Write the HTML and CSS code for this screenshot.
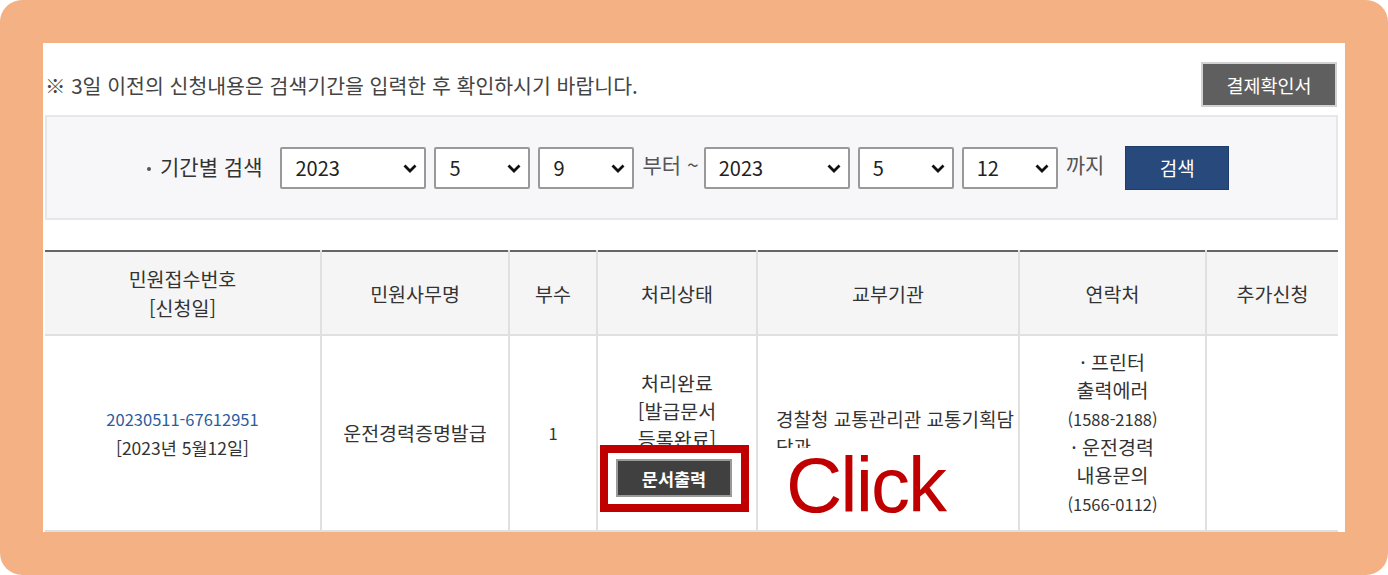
FILE: index.html
```html
<!DOCTYPE html>
<html lang="ko">
  <head>
    <meta charset="UTF-8" />
    <meta name="viewport" content="width=device-width, initial-scale=1.0" />
    <title>민원신청내역</title>
    <link rel="stylesheet" href="styles.css">
  </head>
  <body>
    <div class="frame">
      <div class="panel">
        <!-- notice + receipt button -->
        <div class="top-row">
          <p class="notice">※ 3일 이전의 신청내용은 검색기간을 입력한 후 확인하시기 바랍니다.</p>
          <button class="btn-receipt" type="button">결제확인서</button>
        </div>

        <!-- period search -->
        <form class="search-box">
          <span class="search-label">기간별 검색</span>
          <div class="sel sel-year">
            <select><option>2023</option></select>
            <svg width="14" height="9" viewBox="0 0 14 9"><path d="M1.5 1.5 L7 7 L12.5 1.5" fill="none" stroke="#111" stroke-width="2.8"/></svg>
          </div>
          <div class="sel">
            <select><option>5</option></select>
            <svg width="14" height="9" viewBox="0 0 14 9"><path d="M1.5 1.5 L7 7 L12.5 1.5" fill="none" stroke="#111" stroke-width="2.8"/></svg>
          </div>
          <div class="sel">
            <select><option>9</option></select>
            <svg width="14" height="9" viewBox="0 0 14 9"><path d="M1.5 1.5 L7 7 L12.5 1.5" fill="none" stroke="#111" stroke-width="2.8"/></svg>
          </div>
          <span class="word">부터 ~</span>
          <div class="sel sel-year">
            <select><option>2023</option></select>
            <svg width="14" height="9" viewBox="0 0 14 9"><path d="M1.5 1.5 L7 7 L12.5 1.5" fill="none" stroke="#111" stroke-width="2.8"/></svg>
          </div>
          <div class="sel">
            <select><option>5</option></select>
            <svg width="14" height="9" viewBox="0 0 14 9"><path d="M1.5 1.5 L7 7 L12.5 1.5" fill="none" stroke="#111" stroke-width="2.8"/></svg>
          </div>
          <div class="sel">
            <select><option>12</option></select>
            <svg width="14" height="9" viewBox="0 0 14 9"><path d="M1.5 1.5 L7 7 L12.5 1.5" fill="none" stroke="#111" stroke-width="2.8"/></svg>
          </div>
          <span class="word word-end">까지</span>
          <button class="btn-search" type="button">검색</button>
        </form>

        <!-- application list -->
        <table class="list">
          <colgroup>
            <col style="width: 276px" />
            <col style="width: 188px" />
            <col style="width: 88px" />
            <col style="width: 160px" />
            <col style="width: 262px" />
            <col style="width: 187px" />
            <col style="width: 132px" />
          </colgroup>
          <thead>
            <tr>
              <th>민원접수번호<br />[신청일]</th>
              <th>민원사무명</th>
              <th>부수</th>
              <th>처리상태</th>
              <th>교부기관</th>
              <th>연락처</th>
              <th>추가신청</th>
            </tr>
          </thead>
          <tbody>
            <tr>
              <td><a class="num receipt-no" href="#">20230511-67612951</a><br /><span class="date">[2023년 5월12일]</span></td>
              <td>운전경력증명발급</td>
              <td class="num">1</td>
              <td class="status">
                처리완료<br />[발급문서 등록완료]
                <div class="mark">
                  <button class="btn-print" type="button">문서출력</button>
                  <span class="click-note">Click</span>
                </div>
              </td>
              <td class="org">경찰청 교통관리관 교통기획담당관</td>
              <td>· 프린터<br />출력에러<br /><span class="num">(1588-2188)</span><br />· 운전경력<br />내용문의<br /><span class="num">(1566-0112)</span></td>
              <td></td>
            </tr>
          </tbody>
        </table>
      </div>
    </div>
  </body>
</html>
```

FILE: styles.css
```css
body {
  margin: 0;
  background-color: #fff;
  font-family: "Noto Sans CJK KR", "Noto Sans", sans-serif;
  color: #333;
}
.frame {
  width: 1388px;
  height: 575px;
  box-sizing: border-box;
  padding: 43px;
  background-color: #f4b183;
  border-radius: 22px;
}
.panel {
  height: 489px;
  box-sizing: border-box;
  padding: 0 7px 0 2px;
  background-color: #fff;
  overflow: hidden;
}
.top-row {
  display: flex;
  align-items: center;
  justify-content: space-between;
  padding-top: 19px;
  margin-bottom: 8px;
}
.notice {
  margin: 0;
  font-size: 20.5px;
  color: #444;
}
.btn-receipt {
  width: 136px;
  height: 45px;
  margin-right: 1px;
  font-family: inherit;
  font-size: 18.5px;
  color: #fff;
  background-color: #5f5f5f;
  border: 2px solid #d2d2d2;
}
.search-box {
  height: 105px;
  box-sizing: border-box;
  margin: 0;
  padding-left: 100px;
  display: flex;
  align-items: center;
  background-color: #f7f7f9;
  border: 2px solid #e6e7eb;
}
.search-label {
  font-size: 21px;
  color: #333;
  margin-right: 18px;
  margin-bottom: 4px;
}
.search-label::before {
  content: "";
  display: inline-block;
  width: 4px;
  height: 4px;
  margin: 0 9px 0 0;
  border-radius: 50%;
  background-color: #555;
  vertical-align: middle;
}
.sel {
  position: relative;
  margin-right: 8px;
}
.sel select {
  appearance: none;
  -webkit-appearance: none;
  width: 96px;
  height: 42px;
  padding: 0 0 0 13px;
  font-family: inherit;
  font-size: 20px;
  color: #222;
  background-color: #fff;
  border: 2px solid #999;
  border-radius: 2px;
}
.sel-year select {
  width: 146px;
}
.sel svg {
  position: absolute;
  right: 9px;
  top: 17px;
  pointer-events: none;
}
.word {
  font-size: 21px;
  color: #555;
  margin-right: 5px;
  margin-bottom: 8px;
}
.word-end {
  margin-right: 21px;
}
.btn-search {
  width: 104px;
  height: 44px;
  font-family: inherit;
  font-size: 19px;
  color: #fff;
  background-color: #27497c;
  border: 1px solid #1f3d69;
}
.list {
  margin-top: 30px;
  width: 1293px;
  table-layout: fixed;
  border-collapse: collapse;
  border-top: 2px solid #666;
  font-size: 19.5px;
  color: #333;
}
.list th,
.list td {
  border-right: 2px solid #e0e0e0;
  border-bottom: 2px solid #e0e0e0;
  text-align: center;
  vertical-align: middle;
}
.list th:last-child,
.list td:last-child {
  border-right: none;
}
.list th {
  height: 82px;
  padding: 0;
  font-weight: normal;
  line-height: 29px;
  background-color: #f5f5f5;
}
.list td {
  height: 194px;
  padding: 0 12px;
  line-height: 28px;
}
.num {
  font-size: 16.5px;
}
.date {
  font-size: 17.5px;
}
.receipt-no {
  color: #2d5c9c;
  text-decoration: none;
}
.list td.status {
  word-break: keep-all;
}
.list td.org {
  text-align: left;
  padding: 0 0 0 18px;
  font-size: 19px;
}
.mark {
  position: relative;
  width: 116px;
  margin: 6px 0 0 6px;
}
.mark::after {
  content: "";
  position: absolute;
  left: -16px;
  right: -17px;
  top: -14px;
  bottom: -15px;
  border: 8px solid #c00000;
}
.btn-print {
  display: block;
  width: 116px;
  height: 38px;
  font-family: inherit;
  font-size: 17.5px;
  font-weight: bold;
  color: #fff;
  background-color: #404040;
  border: 2px solid #9a9a9a;
}
.click-note {
  position: absolute;
  left: calc(100% + 38px);
  top: -11px;
  padding-left: 16px;
  font-family: "Liberation Sans", Arial, sans-serif;
  font-size: 78px;
  line-height: 74px;
  letter-spacing: -2px;
  color: #c00000;
  background-color: #fff;
  white-space: nowrap;
}
```
